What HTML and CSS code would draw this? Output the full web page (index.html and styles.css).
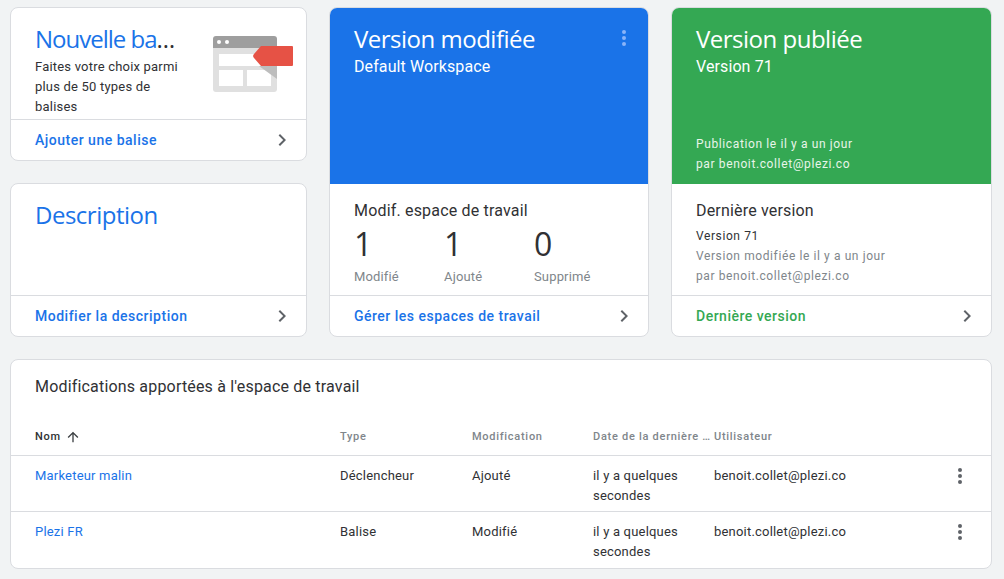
FILE: index.html
```html
<!DOCTYPE html>
<html lang="fr">
<head>
<meta charset="utf-8">
<title>Espace de travail</title>
<link rel="stylesheet" href="styles.css">
</head>
<body>
<main class="page">
  <section class="top">
    <div class="col-left">
      <article class="card small">
        <div class="small-body tag-body">
          <div class="tag-text">
            <h2 class="title ellipsis tight"><span class="blue">Nouvelle balise</span></h2>
            <p class="desc">Faites votre choix parmi plus de 50 types de balises</p>
          </div>
          <svg class="illus" width="80" height="56" viewBox="0 0 80 56">
            <path d="M0 12h64v41a3 3 0 0 1-3 3H3a3 3 0 0 1-3-3z" fill="#e0e0e0"/>
            <path d="M3 0h58a3 3 0 0 1 3 3v9H0V3a3 3 0 0 1 3-3z" fill="#9e9e9e"/>
            <circle cx="6" cy="6" r="2" fill="#fff"/><circle cx="14" cy="6" r="2" fill="#fff"/>
            <rect x="6" y="18" width="52" height="12" fill="#fff"/>
            <rect x="6" y="34" width="24" height="16" fill="#fff"/>
            <rect x="34" y="34" width="24" height="16" fill="#fff"/>
            <path d="M46 30h18v13z" fill="#bdbdbd"/>
            <path d="M48 10h31a1 1 0 0 1 1 1v18a1 1 0 0 1-1 1H48l-7-8a3 3 0 0 1 0-4z" fill="#e65245"/>
          </svg>
        </div>
        <a class="foot blue">Ajouter une balise<svg class="chev" width="24" height="24" viewBox="0 0 24 24"><path d="M8.6 16.6 13.2 12 8.6 7.4 10 6l6 6-6 6z"/></svg></a>
      </article>
      <article class="card small">
        <div class="small-body"><h2 class="title blue">Description</h2></div>
        <a class="foot blue">Modifier la description<svg class="chev" width="24" height="24" viewBox="0 0 24 24"><path d="M8.6 16.6 13.2 12 8.6 7.4 10 6l6 6-6 6z"/></svg></a>
      </article>
    </div>

    <article class="card tall">
      <header class="hero hero-blue">
        <h2 class="title">Version modifiée</h2>
        <p class="sub">Default Workspace</p>
        <svg class="hero-more" width="24" height="24" viewBox="0 0 24 24"><circle cx="12" cy="6" r="2"/><circle cx="12" cy="12" r="2"/><circle cx="12" cy="18" r="2"/></svg>
      </header>
      <div class="tall-body">
        <h3 class="subhead">Modif. espace de travail</h3>
        <div class="stats">
          <div class="stat"><div class="num">1</div><div class="lbl">Modifié</div></div>
          <div class="stat"><div class="num">1</div><div class="lbl">Ajouté</div></div>
          <div class="stat"><div class="num">0</div><div class="lbl">Supprimé</div></div>
        </div>
      </div>
      <a class="foot blue">Gérer les espaces de travail<svg class="chev" width="24" height="24" viewBox="0 0 24 24"><path d="M8.6 16.6 13.2 12 8.6 7.4 10 6l6 6-6 6z"/></svg></a>
    </article>

    <article class="card tall">
      <header class="hero hero-green">
        <h2 class="title">Version publiée</h2>
        <p class="sub">Version 71</p>
        <p class="pub">Publication le il y a un jour<br>par benoit.collet@plezi.co</p>
      </header>
      <div class="tall-body">
        <h3 class="subhead">Dernière version</h3>
        <p class="ver">Version 71</p>
        <p class="ver-meta">Version modifiée le il y a un jour<br>par benoit.collet@plezi.co</p>
      </div>
      <a class="foot green">Dernière version<svg class="chev" width="24" height="24" viewBox="0 0 24 24"><path d="M8.6 16.6 13.2 12 8.6 7.4 10 6l6 6-6 6z"/></svg></a>
    </article>
  </section>

  <section class="card changes">
    <h3 class="changes-title">Modifications apportées à l'espace de travail</h3>
    <div class="row head">
      <div class="cell sorted">Nom<svg class="arrow" width="16" height="16" viewBox="0 0 24 24"><path d="M4 12l1.41 1.41L11 7.83V20h2V7.83l5.58 5.59L20 12l-8-8z"/></svg></div>
      <div class="cell">Type</div>
      <div class="cell">Modification</div>
      <div class="cell ellipsis">Date de la dernière modification</div>
      <div class="cell">Utilisateur</div>
      <div></div>
    </div>
    <div class="row first">
      <div class="cell link">Marketeur malin</div>
      <div class="cell">Déclencheur</div>
      <div class="cell">Ajouté</div>
      <div class="cell">il y a quelques secondes</div>
      <div class="cell">benoit.collet@plezi.co</div>
      <svg class="more" width="24" height="24" viewBox="0 0 24 24"><circle cx="12" cy="6" r="2"/><circle cx="12" cy="12" r="2"/><circle cx="12" cy="18" r="2"/></svg>
    </div>
    <div class="row last">
      <div class="cell link">Plezi FR</div>
      <div class="cell">Balise</div>
      <div class="cell">Modifié</div>
      <div class="cell">il y a quelques secondes</div>
      <div class="cell">benoit.collet@plezi.co</div>
      <svg class="more" width="24" height="24" viewBox="0 0 24 24"><circle cx="12" cy="6" r="2"/><circle cx="12" cy="12" r="2"/><circle cx="12" cy="18" r="2"/></svg>
    </div>
  </section>
</main>
</body>
</html>
```
FILE: styles.css
```css
* { box-sizing: border-box; }
html, body { margin: 0; height: 100%; }
body {
  background: #f1f3f4;
  font-family: Roboto, "Liberation Sans", sans-serif;
  color: #303134;
  font-size: 13px;
  overflow: hidden;
}
h2, h3, p { margin: 0; font-weight: 400; }
.page { padding: 7px 12px 0 10px; display: flex; flex-direction: column; gap: 22px; }
.top { display: grid; grid-template-columns: 297px 320px 321px; gap: 22px; height: 330px; }
.col-left { display: flex; flex-direction: column; gap: 22px; }
.card {
  background: #fff;
  border: 1px solid #dadce0;
  border-radius: 8px;
  overflow: hidden;
}
.small { height: 154px; display: flex; flex-direction: column; }
.small-body { flex: 1; padding: 17px 24px 0; min-height: 0; }
.tag-body { display: flex; position: relative; }
.tag-text { width: 144px; flex: none; }
.illus { position: absolute; left: 202px; top: 28px; }
.title { font-family: "Open Sans", Roboto, sans-serif; font-size: 24px; line-height: 28px; height: 28px; letter-spacing: -0.5px; }
.ellipsis { white-space: nowrap; overflow: hidden; text-overflow: ellipsis; }
.tight { letter-spacing: -1px; }
.blue { color: #1a73e8; }
.green { color: #34a853; }
.desc { font-size: 13px; line-height: 20px; margin-top: 4px; letter-spacing: 0.2px; }
.foot {
  height: 41px; flex: none;
  border-top: 1px solid #dadce0;
  padding: 0 12px 0 24px;
  display: flex; align-items: center; justify-content: space-between;
  font-size: 14px; font-weight: 500; letter-spacing: 0.5px;
}
.chev { fill: #5f6368; }
.tall { display: flex; flex-direction: column; }
.hero { height: 176px; flex: none; padding: 17px 24px 0; color: #fff; position: relative; display: flex; flex-direction: column; }
.hero-blue { background: #1a73e8; }
.hero-green { background: #34a853; }
.sub { font-size: 16px; line-height: 20px; margin-top: 4px; letter-spacing: 0.1px; }
.pub { margin-top: auto; margin-bottom: 10px; font-size: 12px; line-height: 20px; letter-spacing: 0.62px; color: #e8f5e9; }
.hero-more { position: absolute; right: 12px; top: 18px; fill: #8ab4f8; }
.tall-body { flex: 1; padding: 15px 24px 0; }
.subhead { font-size: 16px; line-height: 24px; letter-spacing: 0.18px; }
.stats { display: grid; grid-template-columns: 90px 90px 1fr; margin-top: 2px; }
.num { font-family: "Open Sans", Roboto, sans-serif; font-size: 32px; line-height: 38px; }
.lbl { font-size: 13px; line-height: 20px; color: #80868b; margin-top: 4px; letter-spacing: 0.15px; }
.ver { font-size: 12px; line-height: 20px; margin-top: 3px; letter-spacing: 0.6px; }
.ver-meta { font-size: 12px; line-height: 20px; color: #80868b; letter-spacing: 0.6px; }
.changes { height: 210px; }
.changes-title { font-size: 16px; line-height: 24px; padding: 15px 24px 0; height: 59px; letter-spacing: 0.18px; }
.row {
  display: grid;
  grid-template-columns: 305px 132px 121px 121px 1fr 44px;
  padding-left: 24px;
  padding-top: 10px;
  font-size: 13px;
  line-height: 20px;
  letter-spacing: 0.2px;
}
.row.head {
  border-bottom: 1px solid #dadce0;
  height: 37px;
  padding-top: 8px;
  font-size: 11px;
  font-weight: 500;
  color: #80868b;
  letter-spacing: 0.72px;
}
.row.first { height: 55px; }
.row.last { height: 57px; border-top: 1px solid #dadce0; }
.cell { padding-right: 1px; min-width: 0; }
.sorted { color: #303134; display: flex; align-items: center; gap: 4px; height: 20px; }
.arrow { fill: #3c4043; }
.link { color: #1a73e8; }
.more { fill: #5f6368; margin: -2px 0 0 1px; }
```
